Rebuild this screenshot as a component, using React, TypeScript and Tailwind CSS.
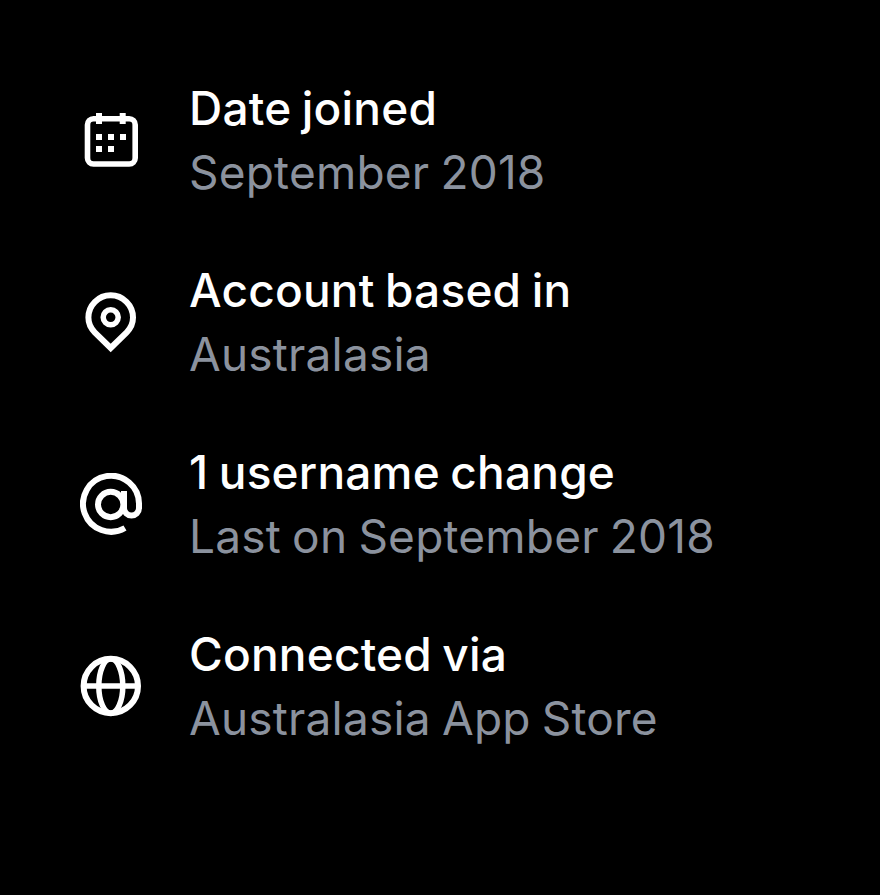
const rows = [
  { icon: 'calendar', title: 'Date joined', sub: 'September 2018' },
  { icon: 'pin', title: 'Account based in', sub: 'Australasia' },
  { icon: 'at', title: '1 username change', sub: 'Last on September 2018' },
  { icon: 'globe', title: 'Connected via', sub: 'Australasia App Store' },
]

function RowIcon({ name }: { name: string }) {
  return (
    <svg viewBox="0 0 62 62" className="h-[62px] w-[62px] shrink-0" fill="none" stroke="white" strokeWidth="6">
      {name === 'calendar' && (
        <>
          <rect x="7.5" y="9.8" width="47.7" height="45.2" rx="6" strokeWidth="5.6" />
          <path d="M19 4v11M42.7 4v11" strokeWidth="6" />
          <path
            d="M16 25h6v6h-6zM28 25h6v6h-6zM40 25h6v6h-6zM16 37h6v6h-6zM28 37h6v6h-6z"
            fill="white"
            stroke="none"
          />
        </>
      )}
      {name === 'pin' && (
        <>
          <path d="M30.7 4.3a22.3 22.3 0 0 1 22.3 22.3c0 6-2.4 10.8-6.3 14.7L30.7 57 14.7 41.3c-3.9-3.9-6.3-8.7-6.3-14.7A22.3 22.3 0 0 1 30.7 4.3z" />
          <circle cx="30.7" cy="26.3" r="7.5" strokeWidth="5.5" />
        </>
      )}
      {name === 'at' && (
        <>
          <path d="M45 55A28 28 0 1 1 59 31v4a7.5 7.5 0 0 1-15 0V18" />
          <circle cx="30.7" cy="31.5" r="12.7" />
        </>
      )}
      {name === 'globe' && (
        <>
          <circle cx="30.8" cy="31" r="27.2" />
          <ellipse cx="30.8" cy="31" rx="12" ry="27.2" strokeWidth="5.5" />
          <path d="M3 31h56" strokeWidth="5.5" />
        </>
      )}
    </svg>
  )
}

export default function App() {
  return (
    <div className="h-[895px] w-[880px] overflow-hidden bg-black pl-20 pt-[49px] font-['Inter',sans-serif] antialiased">
      {rows.map((row) => (
        <div key={row.title} className="flex h-[182px] items-center gap-[47px]">
          <RowIcon name={row.icon} />
          <div className="flex flex-col gap-2 whitespace-nowrap text-[46px] leading-[56px] tracking-[0.2px] [word-spacing:-2px]">
            <span className="font-medium text-white">{row.title}</span>
            <span className="text-[#8b929e]">{row.sub}</span>
          </div>
        </div>
      ))}
    </div>
  )
}
